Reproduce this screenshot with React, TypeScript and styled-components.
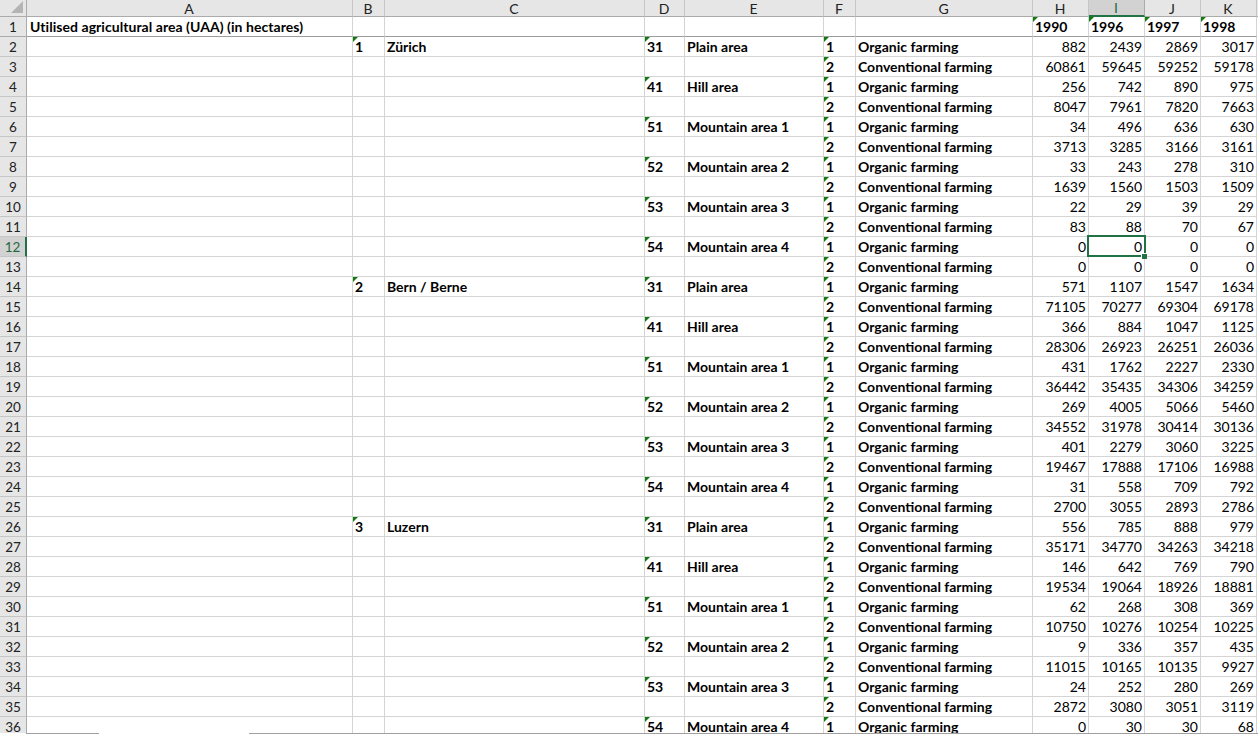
import React from "react";
import styled, { createGlobalStyle } from "styled-components";

const Global = createGlobalStyle`
  html, body { margin: 0; padding: 0; background: #fff; overflow: hidden; }
`;

const COLS = "27px 326px 32px 260px 40px 139px 32px 177px 56px 56px 56px 56px";

const Page = styled.div`
  width: 1258px;
  height: 734px;
  overflow: hidden;
  font-family: Lato, "Liberation Sans", sans-serif;
  font-size: 14px;
  color: #000;
`;

const Sheet = styled.div`
  height: 733px;
  overflow: hidden;
  display: grid;
  grid-template-columns: ${COLS};
  grid-template-rows: 17px;
  grid-auto-rows: 20px;
  background: linear-gradient(#e6e6e6 16px, #ababab 16px, #ababab 17px, transparent 17px);
`;

const Corner = styled.div`
  position: relative;
  background: #e6e6e6;
  border-right: 1px solid #ababab;
  border-bottom: 1px solid #ababab;
  &::after {
    content: "";
    position: absolute;
    right: 3px;
    bottom: 3px;
    border-style: solid;
    border-width: 0 0 12px 12px;
    border-color: transparent transparent #b4b4b4 transparent;
  }
`;

const ColHead = styled.div<{ $sel?: boolean }>`
  background: ${(p) => (p.$sel ? "#d2d2d2" : "#e6e6e6")};
  border-right: 1px solid ${(p) => (p.$sel ? "#ababab" : "#c6c6c6")};
  border-bottom: ${(p) => (p.$sel ? "2px solid #217346" : "1px solid #ababab")};
  display: flex;
  align-items: center;
  justify-content: center;
  font-size: 14px;
  padding-right: 1px;
  color: ${(p) => (p.$sel ? "#1e6b41" : "#222")};
  height: 100%;
  box-sizing: border-box;
`;

const RowHead = styled.div<{ $sel?: boolean; $first?: boolean }>`
  background: ${(p) => (p.$sel ? "#d2d2d2" : "#e6e6e6")};
  border-right: ${(p) => (p.$sel ? "2px solid #217346" : "1px solid #ababab")};
  border-bottom: 1px solid ${(p) => (p.$first ? "#ababab" : "#c6c6c6")};
  display: flex;
  align-items: center;
  justify-content: center;
  font-size: 13.5px;
  color: ${(p) => (p.$sel ? "#1e6b41" : "#222")};
  box-sizing: border-box;
`;

const Cell = styled.div<{ $num?: boolean; $first?: boolean; $flag?: boolean }>`
  position: relative;
  box-sizing: border-box;
  background: #fff;
  border-right: 1px solid #d4d4d4;
  border-bottom: 1px solid ${(p) => (p.$first ? "#9c9c9c" : "#d4d4d4")};
  display: flex;
  align-items: flex-end;
  justify-content: ${(p) => (p.$num ? "flex-end" : "flex-start")};
  padding: 0 ${(p) => (p.$num ? "2px" : "3px")} 0 ${(p) => (p.$num ? "0" : "2px")};
  font-weight: ${(p) => (p.$num ? 400 : 700)};
  line-height: 18px;
  white-space: nowrap;
  ${(p) =>
    p.$flag
      ? `&::before {
    content: "";
    position: absolute;
    left: 0;
    top: 0;
    border-style: solid;
    border-width: 5px 5px 0 0;
    border-color: #107c10 transparent transparent transparent;
  }`
      : ""}
`;

const TitleCell = styled(Cell)`
  letter-spacing: 0.05px;
  padding-left: 3px;
`;

const Selection = styled.span`
  position: absolute;
  left: -2px;
  top: -2px;
  right: -2px;
  bottom: -1px;
  border: 2px solid #217346;
  pointer-events: none;
  z-index: 2;
  &::after {
    content: "";
    position: absolute;
    right: -3px;
    bottom: -4px;
    width: 5px;
    height: 5px;
    background: #217346;
    box-shadow: -1px -1px 0 #fff;
  }
`;

const ScrollEdge = styled.div`
  height: 1px;
  display: grid;
  grid-template-columns: 26px 73px 150px 1fr;
`;

const EdgePart = styled.div<{ $gap?: boolean }>`
  background: ${(p) => (p.$gap ? "#fff" : "#a0a0a0")};
`;

const LETTERS = ["A", "B", "C", "D", "E", "F", "G", "H", "I", "J", "K"];

const VALUES = `882 2439 2869 3017
60861 59645 59252 59178
256 742 890 975
8047 7961 7820 7663
34 496 636 630
3713 3285 3166 3161
33 243 278 310
1639 1560 1503 1509
22 29 39 29
83 88 70 67
0 0 0 0
0 0 0 0
571 1107 1547 1634
71105 70277 69304 69178
366 884 1047 1125
28306 26923 26251 26036
431 1762 2227 2330
36442 35435 34306 34259
269 4005 5066 5460
34552 31978 30414 30136
401 2279 3060 3225
19467 17888 17106 16988
31 558 709 792
2700 3055 2893 2786
556 785 888 979
35171 34770 34263 34218
146 642 769 790
19534 19064 18926 18881
62 268 308 369
10750 10276 10254 10225
9 336 357 435
11015 10165 10135 9927
24 252 280 269
2872 3080 3051 3119
0 30 30 68`
  .split("\n")
  .map((l) => l.split(" "));

const AREAS: [string, string][] = [
  ["31", "Plain area"],
  ["41", "Hill area"],
  ["51", "Mountain area 1"],
  ["52", "Mountain area 2"],
  ["53", "Mountain area 3"],
  ["54", "Mountain area 4"],
];
const CANTONS: [string, string][] = [
  ["1", "Zürich"],
  ["2", "Bern / Berne"],
  ["3", "Luzern"],
];

export default function App() {
  return (
    <Page>
      <Global />
      <Sheet>
        <Corner />
        {LETTERS.map((l) => (
          <ColHead key={l} $sel={l === "I"}>
            {l}
          </ColHead>
        ))}

        <RowHead $first>1</RowHead>
        <TitleCell $first>Utilised agricultural area (UAA) (in hectares)</TitleCell>
        <Cell $first />
        <Cell $first />
        <Cell $first />
        <Cell $first />
        <Cell $first />
        <Cell $first />
        {["1990", "1996", "1997", "1998"].map((y) => (
          <Cell key={y} $first $flag>
            {y}
          </Cell>
        ))}

        {VALUES.map((vals, i) => {
          const row = i + 2;
          const canton = i % 12 === 0 ? CANTONS[i / 12] : undefined;
          const area = i % 2 === 0 ? AREAS[(i / 2) % 6] : undefined;
          const organic = i % 2 === 0;
          return (
            <React.Fragment key={row}>
              <RowHead $sel={row === 12}>{row}</RowHead>
              <Cell />
              <Cell $flag={!!canton}>{canton?.[0]}</Cell>
              <Cell>{canton?.[1]}</Cell>
              <Cell $flag={!!area}>{area?.[0]}</Cell>
              <Cell>{area?.[1]}</Cell>
              <Cell $flag>{organic ? "1" : "2"}</Cell>
              <Cell>{organic ? "Organic farming" : "Conventional farming"}</Cell>
              {vals.map((v, c) => (
                <Cell key={c} $num>
                  {v}
                  {row === 12 && c === 1 ? <Selection /> : null}
                </Cell>
              ))}
            </React.Fragment>
          );
        })}
      </Sheet>
      <ScrollEdge>
        <EdgePart $gap />
        <EdgePart />
        <EdgePart $gap />
        <EdgePart />
      </ScrollEdge>
    </Page>
  );
}
